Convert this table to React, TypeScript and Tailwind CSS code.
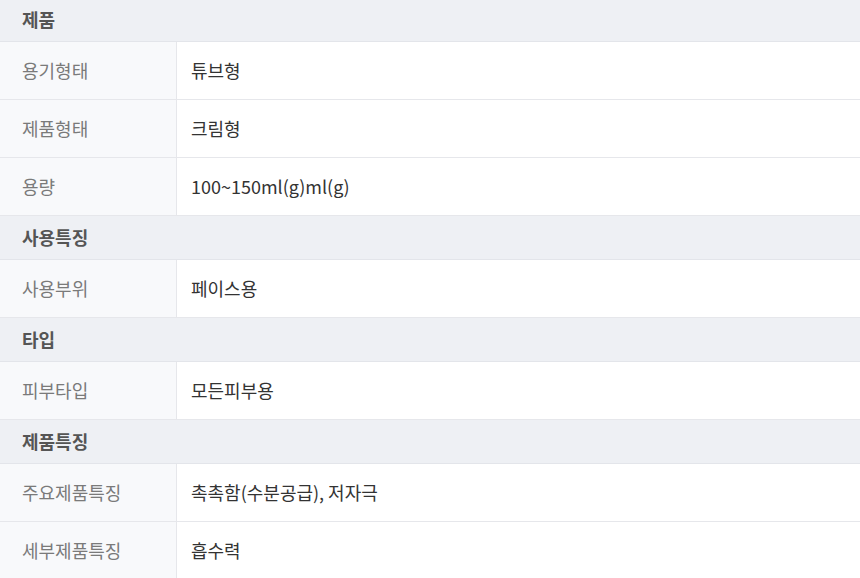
import React from 'react'

type Section = {
  title: string
  rows: { label: string; value: string }[]
}

const sections: Section[] = [
  {
    title: '제품',
    rows: [
      { label: '용기형태', value: '튜브형' },
      { label: '제품형태', value: '크림형' },
      { label: '용량', value: '100~150ml(g)ml(g)' },
    ],
  },
  {
    title: '사용특징',
    rows: [{ label: '사용부위', value: '페이스용' }],
  },
  {
    title: '타입',
    rows: [{ label: '피부타입', value: '모든피부용' }],
  },
  {
    title: '제품특징',
    rows: [
      { label: '주요제품특징', value: '촉촉함(수분공급), 저자극' },
      { label: '세부제품특징', value: '흡수력' },
    ],
  },
]

const App = () => {
  return (
    <div
      className="w-[860px] h-[578px] overflow-hidden bg-white"
      style={{ fontFamily: '"Noto Sans CJK KR", "Noto Sans", sans-serif' }}
    >
      <div className="-mt-[2px] flex flex-col">
        {sections.map((section) => (
          <div key={section.title} className="flex flex-col">
            <div className="h-[44px] flex items-center px-[22px] bg-[#eef0f4] border-b border-[#e3e5ea] text-[18px] font-bold text-[#555]">
              {section.title}
            </div>
            {section.rows.map((row) => (
              <div key={row.label} className="h-[58px] flex border-b border-[#e6e7eb] text-[18px]">
                <div className="w-[177px] shrink-0 flex items-center pl-[22px] bg-[#f8f9fb] border-r border-[#e6e7eb] text-[#7a7a7a]">
                  {row.label}
                </div>
                <div className="flex-1 flex items-center pl-[14px] text-[#333]">
                  {row.value}
                </div>
              </div>
            ))}
          </div>
        ))}
      </div>
    </div>
  )
}

export default App
